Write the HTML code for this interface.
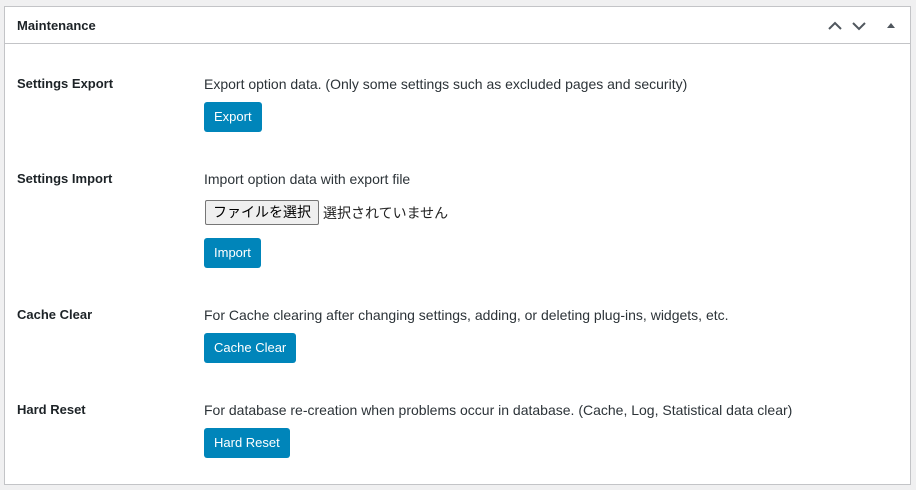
<!DOCTYPE html>
<html><head><meta charset="utf-8"><style>
body{margin:0;width:916px;height:490px;background:#f0f0f1;font-family:"Liberation Sans","Noto Sans CJK JP",sans-serif;color:#1d2327;font-size:13px;overflow:hidden}
.box{position:absolute;left:4px;top:6px;width:905px;height:477px;background:#fff;border:1px solid #c3c4c7}
.hd{height:36px;border-bottom:1px solid #c3c4c7;position:relative}
.hd h2{margin:0;position:absolute;left:12px;top:11px;font-size:13px;font-weight:600}
.lbl{position:absolute;left:12px;font-weight:bold;font-size:13px}
.txt{position:absolute;left:199px;font-size:14px;color:#2c3338}
.btn{position:absolute;left:199px;background:#0085ba;color:#fff;border-radius:3px;height:30px;line-height:30px;padding:0 10px;font-size:13px;box-sizing:border-box}
.file{position:absolute;left:200px;top:193px;height:25px;border:1px solid #767676;background:#efefef;border-radius:2px;box-sizing:border-box;padding:0 7px;line-height:23px;font-size:14px;color:#000}
.ft{position:absolute;left:318px;top:196px;font-size:14px;color:#222}
</style></head><body>
<div class="box">
<div class="hd"><h2>Maintenance</h2>
<svg style="position:absolute;left:822px;top:11px" width="70" height="16"><path d="M2 11 L8 5 L14 11" stroke="#50575e" stroke-width="2" fill="none"/><path d="M26 5 L32 11 L38 5" stroke="#50575e" stroke-width="2" fill="none"/><path d="M60 10 L64 5 L68 10Z" fill="#50575e"/></svg>
</div>
<div class="lbl" style="top:69px">Settings Export</div>
<div class="txt" style="top:69px">Export option data. (Only some settings such as excluded pages and security)</div>
<div class="btn" style="top:95px">Export</div>
<div class="lbl" style="top:164px">Settings Import</div>
<div class="txt" style="top:164px">Import option data with export file</div>
<div class="file">ファイルを選択</div><div class="ft">選択されていません</div>
<div class="btn" style="top:231px">Import</div>
<div class="lbl" style="top:300px">Cache Clear</div>
<div class="txt" style="top:300px">For Cache clearing after changing settings, adding, or deleting plug-ins, widgets, etc.</div>
<div class="btn" style="top:326px">Cache Clear</div>
<div class="lbl" style="top:395px">Hard Reset</div>
<div class="txt" style="top:395px">For database re-creation when problems occur in database. (Cache, Log, Statistical data clear)</div>
<div class="btn" style="top:421px">Hard Reset</div>
</div>
</body></html>
